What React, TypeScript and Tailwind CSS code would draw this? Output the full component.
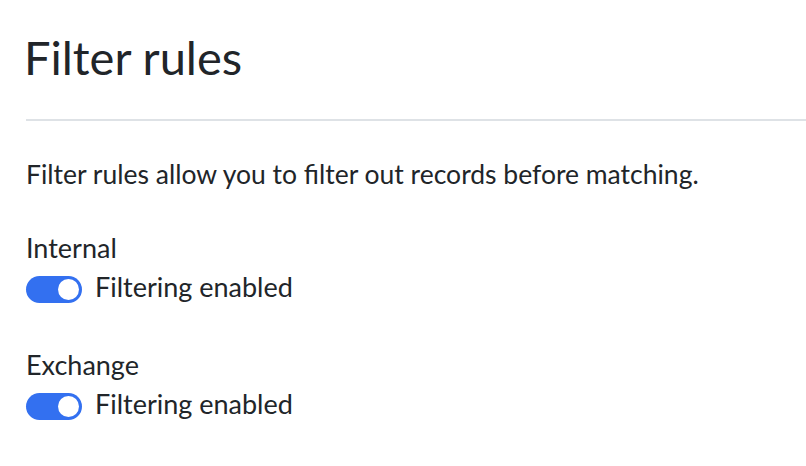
function Toggle() {
  return (
    <span className="mt-[7px] flex h-[27px] w-[56px] shrink-0 items-center justify-end rounded-full bg-[#3370f0] pr-[3px]">
      <span className="h-[21px] w-[21px] rounded-full bg-white" />
    </span>
  );
}

function FilterRow({ label }: { label: string }) {
  return (
    <div>
      <div className="text-[27px] leading-[36px]">{label}</div>
      <label className="mt-[3px] flex items-start gap-[13px]">
        <Toggle />
        <span className="text-[27px] leading-[36px]">Filtering enabled</span>
      </label>
    </div>
  );
}

export default function App() {
  return (
    <div className="min-h-[466px] bg-white pl-[26px] pt-[29px] text-[#212529]" style={{ fontFamily: "Lato, 'Noto Sans', sans-serif" }}>
      <h1 className="-ml-[2px] text-[47px] leading-[56px] font-normal">Filter rules</h1>
      <hr className="mt-[34px] border-0 border-t-2 border-[#dee2e6]" />
      <p className="mt-[35px] text-[26.5px] leading-[36px]">Filter rules allow you to filter out records before matching.</p>
      <div className="mt-[38px]">
        <FilterRow label="Internal" />
      </div>
      <div className="mt-[42px]">
        <FilterRow label="Exchange" />
      </div>
    </div>
  );
}
